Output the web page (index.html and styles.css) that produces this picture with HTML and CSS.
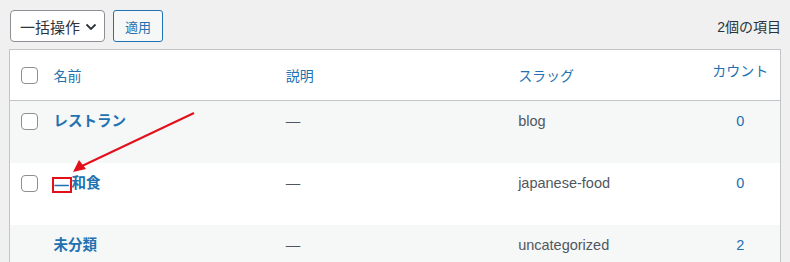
FILE: index.html
```html
<!DOCTYPE html>
<html lang="ja">
<head>
    <meta charset="UTF-8">
    <title>カテゴリー</title>
    <link rel="stylesheet" href="styles.css">
</head>
<body>
<div class="page">
    <!--Top bar-->
    <div class="tablenav">
        <div class="bulk">
            <span class="select">一括操作
                <svg class="chev" width="12" height="8" viewBox="0 0 12 8"><path d="M1.5 1.5 L6 6 L10.5 1.5" fill="none" stroke="#2c3338" stroke-width="1.8"/></svg>
            </span>
            <span class="btn">適用</span>
        </div>
        <span class="count-items">2個の項目</span>
    </div>
    <!--Table-->
    <table class="terms">
        <colgroup>
            <col class="c-check">
            <col class="c-name">
            <col class="c-desc">
            <col class="c-slug">
            <col class="c-count">
        </colgroup>
        <tr class="head">
            <th><span class="box"></span></th>
            <th class="link">名前</th>
            <th class="link">説明</th>
            <th class="link">スラッグ</th>
            <th class="link num"><span class="up">カウント</span></th>
        </tr>
        <tr class="alt">
            <td><span class="box"></span></td>
            <td><span class="name">レストラン</span></td>
            <td>—</td>
            <td>blog</td>
            <td class="num link">0</td>
        </tr>
        <tr>
            <td><span class="box"></span></td>
            <td><span class="name"><span class="mark">—</span>和食</span></td>
            <td>—</td>
            <td>japanese-food</td>
            <td class="num link">0</td>
        </tr>
        <tr class="alt">
            <td></td>
            <td><span class="name">未分類</span></td>
            <td>—</td>
            <td>uncategorized</td>
            <td class="num link">2</td>
        </tr>
    </table>
    <!--Annotation arrow-->
    <svg class="arrow" width="790" height="262" viewBox="0 0 790 262">
        <line x1="194" y1="113" x2="82" y2="166" stroke="#e2101b" stroke-width="2"/>
        <polygon points="73,172 79,160 86,169" fill="#e2101b"/>
    </svg>
</div>
</body>
</html>
```
FILE: styles.css
```css
body {
    margin: 0;
    background: #f0f0f1;
    font-family: "Liberation Sans", "Noto Sans CJK JP", sans-serif;
    font-size: 14px;
    color: #2c3338;
}
.page {
    position: relative;
    height: 262px;
    overflow: hidden;
    padding: 10px 9px 0 9px;
}
.tablenav {
    display: flex;
    justify-content: space-between;
    align-items: center;
    height: 32px;
    padding-left: 1px;
}
.bulk {
    display: flex;
    gap: 8px;
}
.select {
    display: flex;
    align-items: center;
    gap: 5px;
    box-sizing: border-box;
    height: 32px;
    width: 95px;
    padding: 0 0 0 9px;
    font-size: 15px;
    white-space: nowrap;
    background: #fff;
    border: 1px solid #8c8f94;
    border-radius: 4px;
}
.chev {
    margin-top: 1px;
    flex: none;
}
.btn {
    display: flex;
    align-items: center;
    justify-content: center;
    box-sizing: border-box;
    height: 32px;
    width: 50px;
    font-size: 13px;
    color: #2271b1;
    background: #f6f7f7;
    border: 1px solid #2271b1;
    border-radius: 3px;
}
.count-items {
    font-size: 14px;
    margin-top: -1px;
}
.terms {
    margin-top: 7px;
    width: 772px;
    table-layout: fixed;
    border-collapse: collapse;
    border: 1px solid #c3c4c7;
    background: #fff;
}
.c-check { width: 34px; }
.c-name { width: 232px; }
.c-desc { width: 232px; }
.c-slug { width: 192px; }
.c-count { width: 80px; }
th, td {
    padding: 0 10px;
    text-align: left;
    font-weight: normal;
    vertical-align: top;
}
.head th {
    height: 50px;
    vertical-align: middle;
    border-bottom: 1px solid #c3c4c7;
}
.head th:first-child, td:first-child {
    padding: 0 0 0 11px;
}
td {
    height: 62px;
    box-sizing: border-box;
    padding-top: 10px;
    font-size: 14.5px;
    line-height: 20px;
    color: #50575e;
}
td:first-child {
    padding-top: 12px;
}
.alt td {
    background: #f6f7f7;
}
.link, td.link {
    color: #2271b1;
}
.num {
    text-align: center;
}
.up {
    position: relative;
    top: -5px;
}
.box {
    display: block;
    box-sizing: border-box;
    width: 17px;
    height: 17px;
    background: #fff;
    border: 1px solid #8c8f94;
    border-radius: 4px;
}
.name {
    color: #2271b1;
    font-weight: bold;
}
.mark {
    display: inline-block;
    box-sizing: border-box;
    width: 20px;
    height: 16px;
    line-height: 12px;
    margin-left: -2px;
    text-align: center;
    border: 2px solid #e2101b;
    vertical-align: -2px;
}
.arrow {
    position: absolute;
    left: 0;
    top: 0;
    pointer-events: none;
}
```
